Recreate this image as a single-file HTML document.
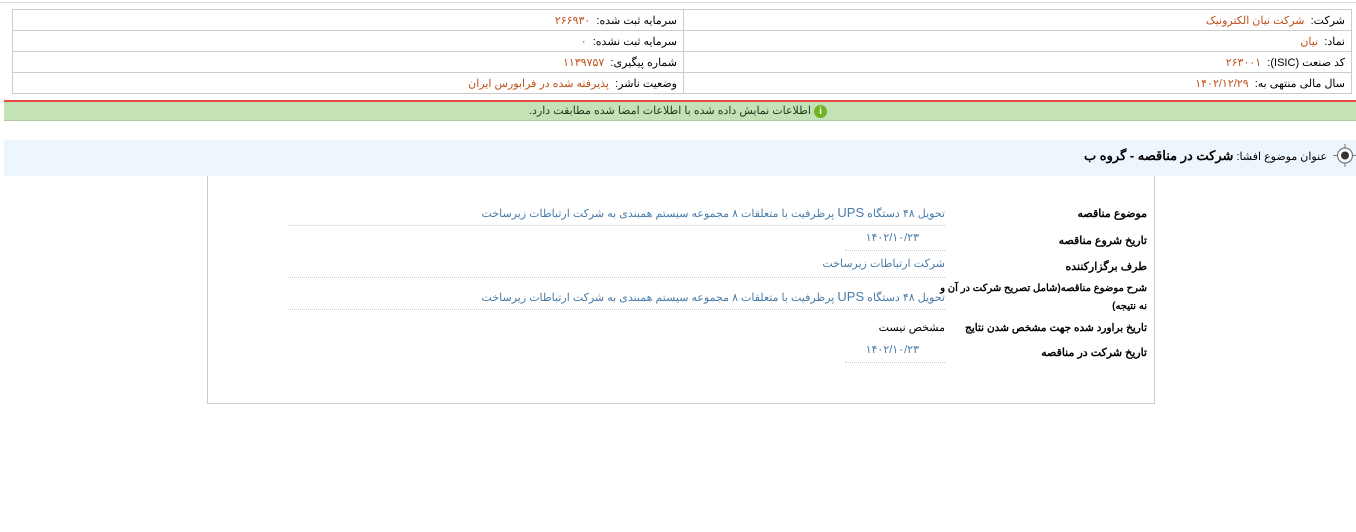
<!DOCTYPE html>
<html><head><meta charset="utf-8"><style>
body{margin:0;width:1356px;height:532px;background:#fff;font-family:"Liberation Sans","Noto Sans CJK SC",sans-serif;font-size:11px;position:relative;overflow:hidden;direction:rtl}
.a{position:absolute;white-space:nowrap}
table{position:absolute;left:12px;top:9px;width:1340px;border-collapse:collapse}
td{border:1px solid #ccc;height:20px;padding:0 6px;color:#000;font-size:11px}
.o{color:#c0501a}
.lb{font-weight:bold;color:#000}
.v{color:#4a7ca8}
.dot{position:absolute;border-bottom:1px dotted #ccc;height:0}
</style></head><body>
<div class="a" style="left:0;top:2px;width:1356px;border-top:1px solid #ddd"></div>
<table>
<tr><td style="width:655px">شرکت:&nbsp; <span class="o">شرکت نیان الکترونیک</span></td><td>سرمایه ثبت شده:&nbsp; <span class="o">۲۶۶۹۳۰</span></td></tr>
<tr><td>نماد:&nbsp; <span class="o">نیان</span></td><td>سرمایه ثبت نشده:&nbsp; <span class="o">۰</span></td></tr>
<tr><td>کد صنعت (ISIC):&nbsp; <span class="o">۲۶۳۰۰۱</span></td><td>شماره پیگیری:&nbsp; <span class="o">۱۱۳۹۷۵۷</span></td></tr>
<tr><td>سال مالی منتهی به:&nbsp; <span class="o">۱۴۰۲/۱۲/۲۹</span></td><td>وضعیت ناشر:&nbsp; <span class="o">پذیرفته شده در فرابورس ایران</span></td></tr>
</table>
<div class="a" style="left:4px;top:100px;width:1352px;height:2px;background:#e84a4a"></div>
<div class="a" style="left:4px;top:102px;width:1352px;height:18px;background:#c3e2b6;border-bottom:1px solid #b0c8a8"></div>
<div class="a" style="left:0;top:102px;width:1356px;text-align:center;line-height:18px;color:#1a3a1a">
<span style="display:inline-block;width:13px;height:13px;border-radius:50%;background:#6fb521;color:#fff;font-weight:bold;font-size:10px;line-height:13px;text-align:center;vertical-align:middle">i</span> اطلاعات نمایش داده شده با اطلاعات امضا شده مطابقت دارد.</div>
<div class="a" style="left:4px;top:140px;width:1352px;height:36px;background:#eef6fd"></div>
<svg class="a" style="left:1333px;top:144px" width="23" height="23" viewBox="0 0 23 23"><circle cx="12" cy="11.5" r="7.5" fill="#fff" stroke="#777" stroke-width="1.2"/><circle cx="12" cy="11.5" r="4" fill="#333"/><line x1="12" y1="0" x2="12" y2="4" stroke="#777"/><line x1="12" y1="19" x2="12" y2="23" stroke="#777"/><line x1="0" y1="11.5" x2="4.5" y2="11.5" stroke="#777"/><line x1="19.5" y1="11.5" x2="23" y2="11.5" stroke="#777"/></svg>
<div class="a" style="right:29px;top:148px;line-height:16px">عنوان موضوع افشا: <b style="font-size:13px">شرکت در مناقصه - گروه ب</b></div>
<div class="a" style="left:207px;top:176px;width:946px;height:227px;border:1px solid #ccc;border-top:none"></div>
<div class="a lb" style="right:209px;top:207px">موضوع مناقصه</div>
<div class="a v" style="right:411px;top:205px">تحویل ۴۸ دستگاه <span style="font-size:13px">UPS</span> پرظرفیت با متعلقات ۸ مجموعه سیستم همبندی به شرکت ارتباطات زیرساخت</div>
<div class="dot" style="left:288px;top:225px;width:657px"></div>
<div class="a lb" style="right:209px;top:234px">تاریخ شروع مناقصه</div>
<div class="a v" style="right:437px;top:231px">۱۴۰۲/۱۰/۲۳</div>
<div class="dot" style="left:845px;top:250px;width:100px"></div>
<div class="a lb" style="right:209px;top:260px">طرف برگزارکننده</div>
<div class="a v" style="right:411px;top:257px">شرکت ارتباطات زیرساخت</div>
<div class="dot" style="left:288px;top:277px;width:657px"></div>
<div class="a lb" style="right:209px;top:283px;font-size:10px">شرح موضوع مناقصه(شامل تصریح شرکت در آن و</div>
<div class="a lb" style="right:209px;top:301px;font-size:10px">نه نتیجه)</div>
<div class="a v" style="right:411px;top:289px">تحویل ۴۸ دستگاه <span style="font-size:13px">UPS</span> پرظرفیت با متعلقات ۸ مجموعه سیستم همبندی به شرکت ارتباطات زیرساخت</div>
<div class="dot" style="left:288px;top:309px;width:657px"></div>
<div class="a lb" style="right:209px;top:322px;font-size:10.5px">تاریخ براورد شده جهت مشخص شدن نتایج</div>
<div class="a" style="right:411px;top:321px">مشخص نیست</div>
<div class="a lb" style="right:209px;top:346px">تاریخ شرکت در مناقصه</div>
<div class="a v" style="right:437px;top:343px">۱۴۰۲/۱۰/۲۳</div>
<div class="dot" style="left:845px;top:362px;width:100px"></div>
</body></html>
